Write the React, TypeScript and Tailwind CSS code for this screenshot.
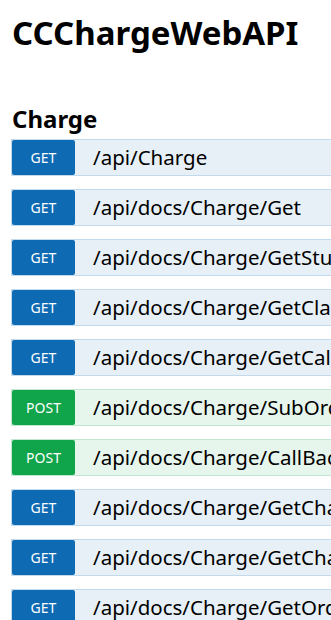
const ops: { method: "GET" | "POST"; path: string }[] = [
  { method: "GET", path: "/api/Charge" },
  { method: "GET", path: "/api/docs/Charge/Get" },
  { method: "GET", path: "/api/docs/Charge/GetStudentInfo" },
  { method: "GET", path: "/api/docs/Charge/GetClassList" },
  { method: "GET", path: "/api/docs/Charge/GetCallBackResult" },
  { method: "POST", path: "/api/docs/Charge/SubOrder" },
  { method: "POST", path: "/api/docs/Charge/CallBack" },
  { method: "GET", path: "/api/docs/Charge/GetChargeList" },
  { method: "GET", path: "/api/docs/Charge/GetChargeInfo" },
  { method: "GET", path: "/api/docs/Charge/GetOrderStatus" },
];

export default function App() {
  return (
    <div
      className="w-[331px] h-[620px] overflow-hidden bg-white text-black"
      style={{ fontFamily: '"Noto Sans", "Open Sans", sans-serif' }}
    >
      <div className="w-[800px] pl-[11px]">
        <h1 className="pl-[1px] pt-[13px] text-[33px] font-bold leading-[40px]">CCChargeWebAPI</h1>
        <h2 className="pl-[1px] mt-[51px] text-[24px] font-bold leading-[29px]">Charge</h2>
        <ul className="mt-[6px] flex flex-col gap-[13px]">
          {ops.map((op, i) => {
            const get = op.method === "GET";
            return (
              <li
                key={i}
                className={
                  "flex items-center h-[37px] border " +
                  (get ? "bg-[#e7f0f7] border-[#c3d9ec]" : "bg-[#e7f6ec] border-[#c3e8d1]")
                }
              >
                <span
                  className={
                    "flex items-center justify-center w-[63px] h-[35px] rounded-[2px] text-[14px] text-white " +
                    (get ? "bg-[#0f6ab4]" : "bg-[#10a54a]")
                  }
                >
                  {op.method}
                </span>
                <span className="ml-[18px] text-[20.5px] whitespace-nowrap">{op.path}</span>
              </li>
            );
          })}
        </ul>
      </div>
    </div>
  );
}
